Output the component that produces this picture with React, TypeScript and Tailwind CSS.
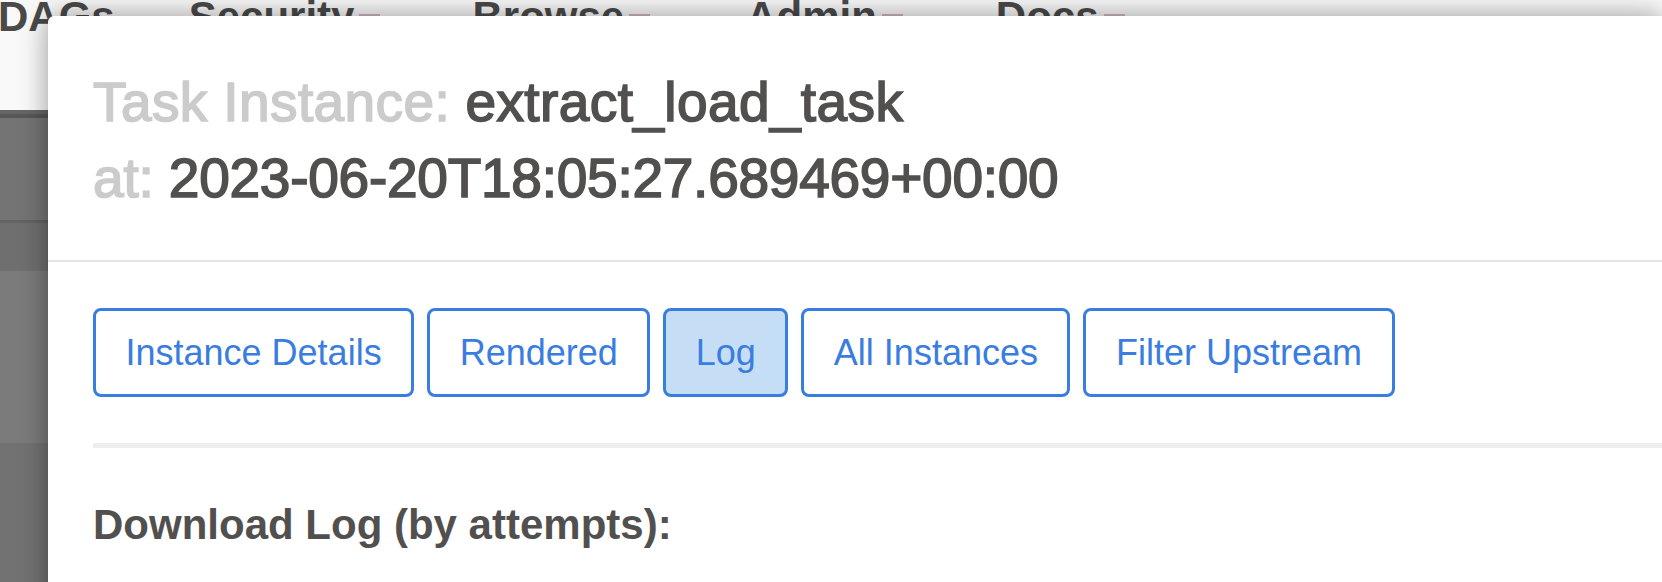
import React from 'react';

const font = { fontFamily: '"Liberation Sans", Arial, Helvetica, sans-serif' };

interface NavItem {
  label: string;
  gap: string;
  caret: boolean;
}

const navItems: NavItem[] = [
  { label: 'DAGs', gap: 'ml-[-2px]', caret: false },
  { label: 'Security', gap: 'ml-[74px]', caret: true },
  { label: 'Browse', gap: 'ml-[92px]', caret: true },
  { label: 'Admin', gap: 'ml-[96px]', caret: true },
  { label: 'Docs', gap: 'ml-[93px]', caret: true },
];

const tabs = ['Instance Details', 'Rendered', 'Log', 'All Instances', 'Filter Upstream'];

function Backdrop() {
  return (
    <div className="flex flex-col w-full h-full">
      {/* navbar of the page behind */}
      <div className="h-[110px] bg-[#f9f9f9] overflow-hidden">
        <div className="flex items-start mt-[-4px]">
          {navItems.map(item => (
            <div key={item.label} className={`flex items-start ${item.gap}`}>
              <span className="text-[42px] leading-[42px] font-bold text-[#4a4a4a] whitespace-nowrap">
                {item.label}
              </span>
              {item.caret && (
                <span className="ml-[5px] mt-[18px] w-[21px] h-[8px] bg-[#d3b6c6]" />
              )}
            </div>
          ))}
        </div>
      </div>
      {/* dimmed page content */}
      <div className="h-[4px] bg-[#666666]" />
      <div className="h-[4px] bg-[#575757]" />
      <div className="h-[102px] bg-[#747474]" />
      <div className="h-[3px] bg-[#636363]" />
      <div className="h-[48px] bg-[#6f6f6f]" />
      <div className="h-[172px] bg-[#7b7b7b]" />
      <div className="flex-1 bg-[#727272]" />
    </div>
  );
}

function Modal() {
  return (
    <div className="absolute left-[48px] top-[16px] right-0 bottom-[-200px] bg-white rounded-tl-[6px] shadow-[0_0_28px_rgba(0,0,0,0.4)]">
      {/* Header */}
      <div className="px-[45px] pt-[48px] pb-[44px] border-b-2 border-[#e5e5e5]">
        <h4 className="text-[55px] leading-[76px] text-[#51504f] whitespace-nowrap [-webkit-text-stroke-width:1.6px] [-webkit-text-stroke-color:currentColor]">
          <span className="text-[#cbcbcb] tracking-[0.4px]">Task Instance:</span>{' '}
          <span className="tracking-[0.4px]">extract_load_task</span>
          <br />
          <span className="text-[#cbcbcb] tracking-[-0.2px]">at:</span>{' '}
          <span className="tracking-[-0.25px]">2023-06-20T18:05:27.689469+00:00</span>
        </h4>
      </div>

      {/* Body */}
      <div className="pl-[45px] pt-[46px]">
        <div className="flex gap-[13px]">
          {tabs.map(tab => (
            <button
              key={tab}
              className={`border-[3px] border-[#3a7de1] rounded-[8px] px-[29.5px] py-[16px] text-[36px] leading-[51px] text-[#3a7de1] whitespace-nowrap ${
                tab === 'Log' ? 'bg-[#c6ddf6]' : 'bg-white'
              }`}
            >
              {tab}
            </button>
          ))}
        </div>

        <div className="mt-[46px] h-[5px] bg-[#eeeeee]" />

        <h4 className="mt-[54px] text-[42px] leading-[46px] font-bold text-[#51504f]">
          Download Log (by attempts):
        </h4>
      </div>
    </div>
  );
}

export default function App() {
  return (
    <div className="relative w-[1662px] h-[582px] overflow-hidden bg-white" style={font}>
      <Backdrop />
      <Modal />
    </div>
  );
}
